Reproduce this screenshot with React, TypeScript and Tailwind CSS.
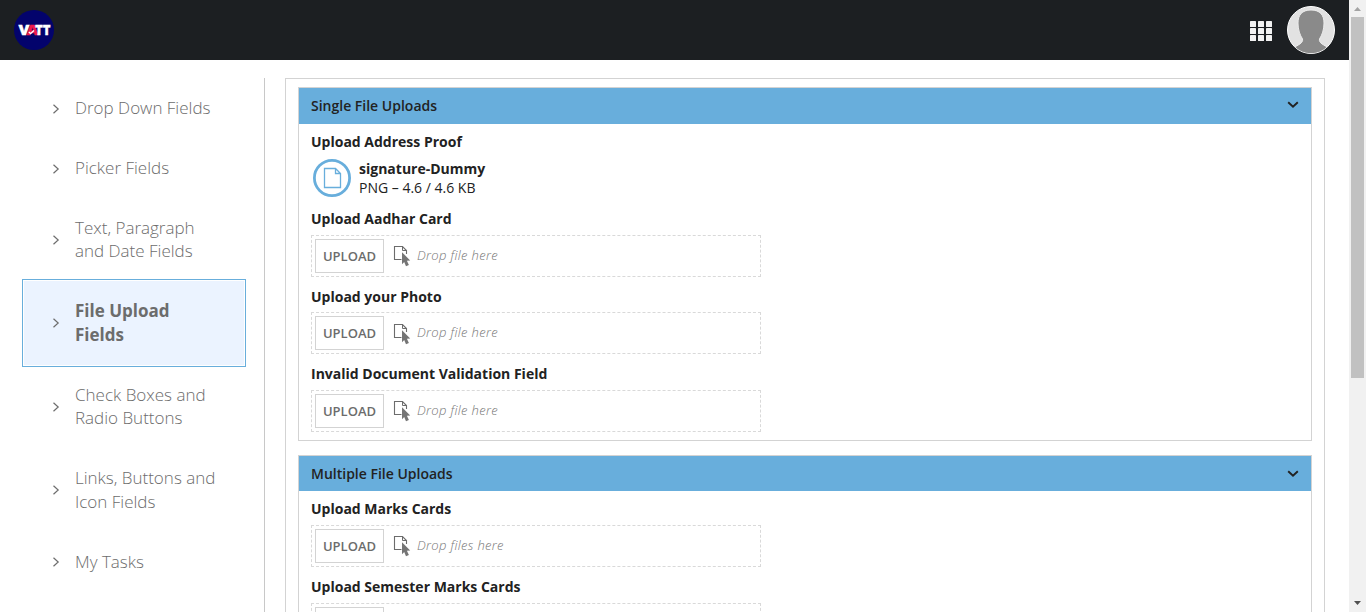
import React from "react";

const NAV: string[][] = [
  ["Drop Down Fields"],
  ["Picker Fields"],
  ["Text, Paragraph", "and Date Fields"],
  ["File Upload", "Fields"],
  ["Check Boxes and", "Radio Buttons"],
  ["Links, Buttons and", "Icon Fields"],
  ["My Tasks"],
];

function NavItem({ lines, active }: { lines: string[]; active: boolean }) {
  return (
    <a
      className={
        "mx-[24px] flex shrink-0 items-center pl-[28px] text-[#6c6c6c] " +
        (lines.length > 1 ? "h-[83.4px] pb-[0.6px] " : "h-[60px] ") +
        (active
          ? "bg-[#ebf3ff] font-bold outline outline-1 outline-offset-1 outline-[#68aedc]"
          : "font-light")
      }
    >
      <svg width="9" height="12" viewBox="0 0 9 12" className="mt-[1px] shrink-0" fill="none" stroke="#6c6c6c" strokeWidth="1.2">
        <path d="M1.5 1.7 L6.2 6 L1.5 10.3" />
      </svg>
      <span className="ml-[14px] text-[17px] leading-[23.4px]">
        {lines.map((l) => (
          <span key={l} className="block whitespace-nowrap">{l}</span>
        ))}
      </span>
    </a>
  );
}

function Field({ label, lowered, children }: { label: string; lowered?: boolean; children: React.ReactNode }) {
  return (
    <div>
      <div
        className={
          "text-[14px] font-bold leading-5 text-[#222] " +
          (lowered ? "mb-[5px] h-[21px] pt-[1px]" : "mb-[6px] h-5 pt-[0.3px]")
        }
      >
        {label}
      </div>
      {children}
    </div>
  );
}

function DropZone({ text }: { text: string }) {
  return (
    <div className="flex h-[42px] w-[450px] items-center border border-dashed border-[#d9d9d9] pl-[3px]">
      <button className="h-[34px] w-[69px] border border-[#d3d3d3] bg-white pt-[1.4px] text-[13px] font-semibold text-[#6c6c6c]">
        UPLOAD
      </button>
      <svg width="18" height="22" viewBox="0 0 18 22" className="ml-[9px] mt-[0.5px]">
        <path d="M8.5 14.5 H1.5 V1.5 H9.5 L13.5 5.5 V9" fill="none" stroke="#6c6c6c" strokeWidth="1.1" />
        <path d="M9.5 1.5 V5.5 H13.5" fill="none" stroke="#6c6c6c" />
        <path d="M9 7.2 L17.2 15.4 L13.9 15.8 L15.9 20 L13 21.3 L11.2 17 L9 19.2 Z" fill="#757575" />
      </svg>
      <span className="-mt-[2px] ml-[6px] text-[13px] font-light italic leading-5 tracking-[0.33px] text-[#767676]">{text}</span>
    </div>
  );
}

function Section({
  title,
  header,
  body,
  children,
}: {
  title: string;
  header: string;
  body: string;
  children: React.ReactNode;
}) {
  return (
    <section className="border border-[#d3d3d3]">
      <h2 className={"flex items-center justify-between bg-[#68aedc] px-[12px] text-[14px] font-semibold text-[#222] " + header}>
        {title}
        <svg width="12" height="8" viewBox="0 0 12 8" fill="none" stroke="#222" strokeWidth="1.9">
          <path d="M1.2 1.2 L6 5.8 L10.8 1.2" />
        </svg>
      </h2>
      <div className={"flex flex-col gap-[9.6px] pl-[12px] " + body}>{children}</div>
    </section>
  );
}

export default function App() {
  return (
    <div className="flex h-[612px] w-[1366px] overflow-hidden bg-white font-['Open_Sans',sans-serif]">
      <div className="flex w-[1349px] flex-col">
        <header className="flex h-[60px] shrink-0 items-center bg-[#1c1f22] px-[14px]">
          <svg width="40" height="40" viewBox="0 0 40 40" className="font-['Open_Sans',sans-serif]">
            <circle cx="20" cy="20" r="20" fill="#03036c" />
            <g fontSize="14" fontWeight="800" strokeWidth="0.3">
              <text x="4.5" y="25.2" textLength="11" lengthAdjust="spacingAndGlyphs" fill="#fff" stroke="#fff">V</text>
              <text x="12.4" y="25.2" textLength="11.4" lengthAdjust="spacingAndGlyphs" fill="#ee1c4b" stroke="#ee1c4b">A</text>
              <text x="21" y="25.2" textLength="15.5" lengthAdjust="spacingAndGlyphs" fill="#fff" stroke="#fff">TT</text>
            </g>
            <path d="M14.8 22 L16.6 23.6 L20 20.6" fill="none" stroke="#fff" strokeWidth="1.3" />
          </svg>
          <svg width="22" height="20" viewBox="0 0 22 20" className="ml-auto mt-[2px]" fill="#f2f2f2">
            {[0, 7, 14].map((y) =>
              [0, 8, 16].map((x) => <rect key={x + "-" + y} x={x} y={y} width="6" height="6" rx=".6" />)
            )}
          </svg>
          <svg width="48" height="48" viewBox="0 0 48 48" className="ml-[15px]">
            <defs>
              <clipPath id="face"><circle cx="24" cy="24" r="23.2" /></clipPath>
            </defs>
            <circle cx="24" cy="24" r="23.5" fill="#e2e2e2" stroke="#fff" />
            <g clipPath="url(#face)">
              <path
                d="M24 4 C15 4 11 9 11 17 C11 24 13 29 15.5 33 C16.5 37 11 39 6 42 V50 H42 V42 C37 39 31.5 37 32.5 33 C35 29 37 24 37 17 C37 9 33 4 24 4 Z"
                fill="#8a8a8a" stroke="#ececec" strokeWidth="1"
              />
            </g>
          </svg>
        </header>
        <div className="flex min-h-0 flex-1 pt-[18px]">
          <nav className="flex w-[265px] shrink-0 flex-col border-r border-[#c8c8c8]">
            <div className="flex w-[268px] flex-col">
              {NAV.map((lines, i) => (
                <NavItem key={lines[0]} lines={lines} active={i === 3} />
              ))}
            </div>
          </nav>
          <main className="ml-5 flex h-[700px] w-[1040px] flex-col gap-[14px] border border-[#d3d3d3] px-[12px] pt-[8px]">
            <Section title="Single File Uploads" header="h-[36px] pb-[1.2px]" body="pt-[7.2px] pb-[8.2px]">
              <Field label="Upload Address Proof" lowered>
                <div className="flex h-[42px] items-center pl-[2px]">
                  <svg width="38" height="38" viewBox="0 0 38 38" fill="none" stroke="#68aedc">
                    <circle cx="19" cy="19" r="17.6" strokeWidth="2.8" />
                    <path d="M11.5 9.5 H22.5 L27.5 14.5 V28.5 H11.5 Z M22.5 9.5 V14.5 H27.5" strokeWidth="1.3" />
                  </svg>
                  <div className="ml-2 text-[14px] leading-[19px] text-[#222]">
                    <div className="font-bold">signature-Dummy</div>
                    <div>PNG – 4.6 / 4.6 KB</div>
                  </div>
                </div>
              </Field>
              <Field label="Upload Aadhar Card"><DropZone text="Drop file here" /></Field>
              <Field label="Upload your Photo"><DropZone text="Drop file here" /></Field>
              <Field label="Invalid Document Validation Field"><DropZone text="Drop file here" /></Field>
            </Section>
            <Section title="Multiple File Uploads" header="h-[35px]" body="pt-[7.9px] pb-[8px]">
              <Field label="Upload Marks Cards"><DropZone text="Drop files here" /></Field>
              <Field label="Upload Semester Marks Cards"><DropZone text="Drop files here" /></Field>
            </Section>
          </main>
        </div>
      </div>
      <div className="flex w-[17px] flex-col items-center bg-[#f1f1f1]">
        <svg width="17" height="17" viewBox="0 0 17 17"><path d="M5 11 L8.5 7 L12 11 Z" fill="#a3a3a3" /></svg>
        <div className="h-[361px] w-[13px] bg-[#c1c1c1]" />
        <svg width="17" height="17" viewBox="0 0 17 17" className="mt-auto"><path d="M5 6 L8.5 10 L12 6 Z" fill="#505050" /></svg>
      </div>
    </div>
  );
}
